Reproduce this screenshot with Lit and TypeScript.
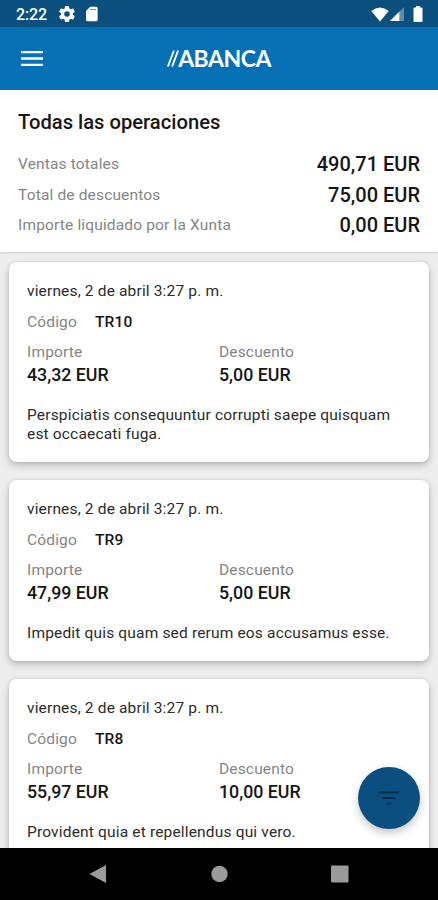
import { LitElement, html, css } from "lit";
import { customElement, property } from "lit/decorators.js";

interface Operation {
  date: string;
  code: string;
  amount: string;
  discount: string;
  text: string;
}

const OPERATIONS: Operation[] = [
  { date: "viernes, 2 de abril 3:27 p. m.", code: "TR10", amount: "43,32 EUR", discount: "5,00 EUR", text: "Perspiciatis consequuntur corrupti saepe quisquam est occaecati fuga." },
  { date: "viernes, 2 de abril 3:27 p. m.", code: "TR9", amount: "47,99 EUR", discount: "5,00 EUR", text: "Impedit quis quam sed rerum eos accusamus esse." },
  { date: "viernes, 2 de abril 3:27 p. m.", code: "TR8", amount: "55,97 EUR", discount: "10,00 EUR", text: "Provident quia et repellendus qui vero." },
];

@customElement("status-bar")
class StatusBar extends LitElement {
  static styles = css`
    :host { display: flex; flex: none; height: 27px; background: #0a4f7d; color: #fff; align-items: center; padding: 1px 13px 0 16px; box-sizing: border-box; }
    .time { font-size: 16px; font-weight: 500; letter-spacing: -0.1px; width: 43px; line-height: 19px; }
    .gear { width: 16px; height: 16px; margin-right: 10px; }
    .card { width: 14px; height: 16px; }
    .space { flex: 1; }
    .wifi { width: 18px; height: 15px; margin-right: 1px; }
    .signal { width: 15px; height: 14px; margin-right: 8px; }
    .battery { width: 10px; height: 16px; margin-right: 2px; }
    svg { display: block; }
  `;
  render() {
    return html`
      <span class="time">2:22</span>
      <svg class="gear" viewBox="2 2 20 20" fill="#fff"><path d="M19.4 13a7.800 7.800 0 0 0 0-2l2.100-1.650a.5.5 0 0 0 .12-.64l-2-3.460a.5.5 0 0 0-.61-.22l-2.490 1a7.300 7.300 0 0 0-1.690-.98l-.38-2.650A.49.49 0 0 0 14 2h-4a.49.49 0 0 0-.49.420l-.38 2.650c-.61.25-1.170.590-1.690.98l-2.490-1a.5.5 0 0 0-.61.22l-2 3.460a.5.5 0 0 0 .12.640L4.570 11a7.900 7.900 0 0 0 0 2l-2.110 1.650a.5.5 0 0 0-.12.640l2 3.460c.12.220.39.300.61.220l2.490-1c.52.400 1.080.730 1.690.980l.38 2.650c.03.240.24.400.49.400h4c.25 0 .46-.180.49-.420l.38-2.650a7.700 7.700 0 0 0 1.690-.980l2.490 1c.23.090.49 0 .61-.220l2-3.460a.5.5 0 0 0-.12-.640zM12 15.500a3.500 3.500 0 1 1 0-7 3.500 3.500 0 0 1 0 7z"/></svg>
      <svg class="card" viewBox="0 0 14 16"><path fill="#fff" d="M5.200.8H11.200Q12.600.8 12.600 2.200V13.800Q12.600 15.200 11.200 15.200H2.400Q1 15.200 1 13.800V5z"/><path stroke="#0a4f7d" opacity=".55" d="M5 3.500H11"/></svg>
      <span class="space"></span>
      <svg class="wifi" viewBox="0 0 18 15"><path fill="#fff" d="M.3 4Q9-3 17.700 4L9 14.500z"/></svg>
      <svg class="signal" viewBox="0 0 15 14"><path fill="#fff" fill-opacity=".35" d="M14 0V14H0z"/><path fill="#fff" d="M9.300 4.700V14H0z"/></svg>
      <svg class="battery" viewBox="0 0 10 16"><path fill="#fff" d="M3 0H7V1.500H8.500Q9.500 1.500 9.500 2.500V15Q9.500 16 8.500 16H1.500Q.5 16 .5 15V2.500Q.5 1.500 1.500 1.500H3z"/></svg>
    `;
  }
}

@customElement("operation-card")
class OperationCard extends LitElement {
  @property({ attribute: false }) op!: Operation;
  static styles = css`
    :host { display: block; background: #fff; border-radius: 8px; padding: 20px 18px 18px; box-shadow: 0 3px 7px rgba(0, 0, 0, 0.24), 0 0 3px rgba(0, 0, 0, 0.08); color: #2b2b2b; font-size: 15.500px; line-height: 19px; letter-spacing: 0.160px; }
    .code { display: flex; gap: 18px; margin-top: 11.500px; }
    .label { color: #858585; }
    .strong { color: #151515; font-weight: 500; }
    .grid { display: grid; grid-template-columns: 192px 1fr; margin-top: 11.500px; }
    .value { color: #151515; font-weight: 500; font-size: 17.800px; line-height: 20px; letter-spacing: 0; margin-top: 2.500px; }
    .text { margin-top: 21.500px; letter-spacing: 0.170px; }
  `;
  render() {
    const o = this.op;
    return html`
      <div>${o.date}</div>
      <div class="code"><span class="label">Código</span><span class="strong">${o.code}</span></div>
      <div class="grid">
        <div><div class="label">Importe</div><div class="value">${o.amount}</div></div>
        <div><div class="label">Descuento</div><div class="value">${o.discount}</div></div>
      </div>
      <div class="text">${o.text}</div>
    `;
  }
}

@customElement("app-root")
class AppRoot extends LitElement {
  static styles = css`
    :host { display: flex; flex-direction: column; height: 900px; overflow: hidden; position: relative; font-family: Roboto, sans-serif; background: #ededed; }
    .bar { flex: none; height: 63px; background: #0570b4; display: grid; grid-template-columns: 1fr auto 1fr; align-items: center; padding: 0 21px; box-sizing: border-box; }
    .menu { width: 22px; height: 17px; }
    .brand { color: #fff; font-family: Lato, sans-serif; font-weight: 700; font-size: 23px; line-height: 26px; letter-spacing: -0.5px; display: flex; align-items: center; padding-bottom: 1px; }
    .slashes { width: 12px; height: 17px; margin-right: -1px; }
    .summary { flex: none; height: 162px; box-sizing: border-box; background: #fff; padding: 20px 18px 0; box-shadow: 0 1px 2px rgba(0, 0, 0, 0.14); }
    .title { font-size: 20.200px; line-height: 24px; font-weight: 500; color: #161616; margin-bottom: 15px; }
    .row { display: flex; justify-content: space-between; align-items: center; height: 30.500px; }
    .name { color: #858585; font-size: 15.500px; letter-spacing: 0.160px; }
    .sum { color: #161616; font-size: 20px; font-weight: 500; }
    .list { flex: 1; min-height: 0; overflow: hidden; padding: 10px 9px 0; display: flex; flex-direction: column; gap: 18px; }
    operation-card { flex: none; }
    .nav { flex: none; height: 52.500px; background: #000; }
    .nav svg { display: block; }
    .fab { position: absolute; left: 358px; top: 767px; width: 62px; height: 62px; border-radius: 50%; background: #0a4f80; box-shadow: 0 4px 8px rgba(0, 0, 0, 0.22); display: grid; place-items: center; }
  `;
  render() {
    return html`
      <status-bar></status-bar>
      <header class="bar">
        <svg class="menu" viewBox="0 0 22 17" stroke="#fff" stroke-width="2.300"><path d="M0 2.200H22M0 8.500H22M0 14.800H22"/></svg>
        <div class="brand">
          <svg class="slashes" viewBox="0 0 12 17" stroke="#fff" stroke-width="1.900"><path d="M.9 16.500L6.900.5M5.100 16.500L11.100.5"/></svg>
          <span>ABANCA</span>
        </div>
      </header>
      <section class="summary">
        <div class="title">Todas las operaciones</div>
        <div class="row"><span class="name">Ventas totales</span><span class="sum">490,71 EUR</span></div>
        <div class="row"><span class="name">Total de descuentos</span><span class="sum">75,00 EUR</span></div>
        <div class="row"><span class="name">Importe liquidado por la Xunta</span><span class="sum">0,00 EUR</span></div>
      </section>
      <main class="list">${OPERATIONS.map((o) => html`<operation-card .op=${o}></operation-card>`)}</main>
      <nav class="nav">
        <svg width="438" height="52" fill="#9b9b9b"><path d="M89.500 26L106 17V35z"/><circle cx="219.500" cy="26" r="8.200"/><rect x="331" y="17.500" width="17.500" height="17" rx="1"/></svg>
      </nav>
      <div class="fab">
        <svg width="22" height="14" viewBox="0 0 22 14" stroke="#082c48" stroke-width="2"><path d="M1 1.500H21M4.500 7H17.500M9 12.500H13"/></svg>
      </div>
    `;
  }
}
